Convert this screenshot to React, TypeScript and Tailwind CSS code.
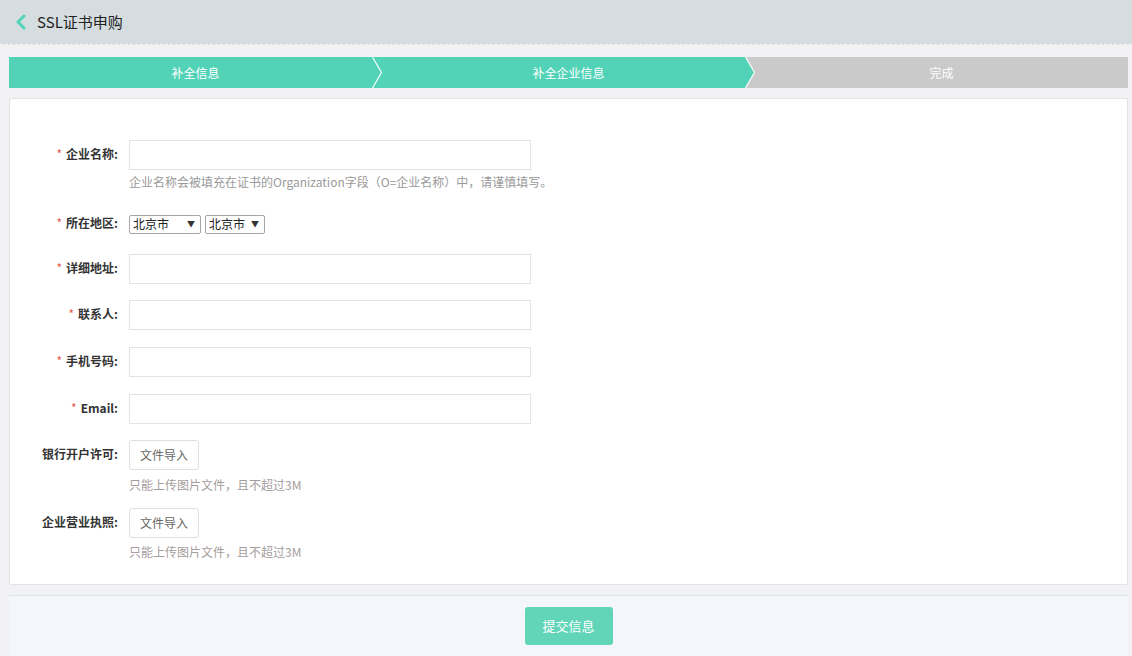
import React from "react";

const font = { fontFamily: '"Microsoft YaHei", "Noto Sans CJK SC", "Noto Sans", sans-serif' };

function Label({ text, required }: { text: string; required?: boolean }) {
  return (
    <div className="w-[108px] shrink-0 text-right text-[12px] font-bold leading-[28px] text-[#333]">
      {required && <span className="mr-[4px] font-normal text-[#e05a4f]">*</span>}
      {text}:
    </div>
  );
}

function TextInput() {
  return <div className="h-[30px] w-[402px] border border-[#e3e3e3] bg-white" />;
}

function FakeSelect({ width }: { width: string }) {
  return (
    <div className={`flex h-[19px] ${width} items-center justify-between rounded-[2px] border border-[#a6a6a6] bg-white pl-[3px] pr-[5px] text-[12px] text-[#222]`}>
      <span>北京市</span>
      <span className="text-[8px] text-[#333]">▼</span>
    </div>
  );
}

function UploadButton() {
  return (
    <div className="flex h-[30px] w-[70px] items-center justify-center rounded-[3px] border border-[#dcdfe6] bg-white text-[12px] text-[#666]">
      文件导入
    </div>
  );
}

function Chevron({ next }: { next: string }) {
  return (
    <svg className="absolute right-0 top-0 h-[31px] w-[10px]" viewBox="0 0 10 31" preserveAspectRatio="none">
      <polygon points="0.5,0 10,0 10,31 0.5,31 9.5,15.5" fill={next} />
      <polyline points="0.5,0 9.5,15.5 0.5,31" fill="none" stroke="#ffffff" strokeWidth="1.2" />
    </svg>
  );
}

export default function App() {
  const steps = [
    { label: "补全信息", color: "#52d3b7" },
    { label: "补全企业信息", color: "#52d3b7" },
    { label: "完成", color: "#cacaca" },
  ];

  return (
    <div className="min-h-[656px] bg-[#f2f2f5]" style={font}>
      {/* Header */}
      <header className="flex h-[45px] items-center border-b border-dashed border-[#f5f5f5] bg-[#d5dde0] pl-[15px]">
        <svg width="12" height="16" viewBox="0 0 12 16" className="mr-[10px]">
          <polyline points="9,2 3,8 9,14" fill="none" stroke="#52d3b7" strokeWidth="3" strokeLinecap="round" strokeLinejoin="round" />
        </svg>
        <span className="text-[15px] text-[#222]">SSL证书申购</span>
      </header>

      <div className="pl-[9px] pr-[4px]">
        {/* Steps */}
        <div className="mt-[12px] flex h-[31px]">
          {steps.map((s, i) => (
            <div
              key={s.label}
              className="relative flex flex-1 items-center justify-center text-[12px] text-white"
              style={{ backgroundColor: s.color }}
            >
              {s.label}
              {i < steps.length - 1 && <Chevron next={steps[i + 1].color} />}
            </div>
          ))}
        </div>

        {/* Form card */}
        <div className="mt-[10px] rounded-[2px] border border-[#e3e3e3] bg-white pb-[24px] pt-[41px]">
          <div className="flex gap-[11px]">
            <Label text="企业名称" required />
            <div>
              <TextInput />
              <div className="mt-[4px] text-[12px] leading-[16px] text-[#9a9a9a]">
                企业名称会被填充在证书的Organization字段（O=企业名称）中，请谨慎填写。
              </div>
            </div>
          </div>

          <div className="mt-[19px] flex gap-[11px]">
            <Label text="所在地区" required />
            <div className="flex h-[30px] items-center gap-[4px]">
              <FakeSelect width="w-[72px]" />
              <FakeSelect width="w-[60px]" />
            </div>
          </div>

          <div className="mt-[15px] flex gap-[11px]">
            <Label text="详细地址" required />
            <TextInput />
          </div>

          <div className="mt-[16px] flex gap-[11px]">
            <Label text="联系人" required />
            <TextInput />
          </div>

          <div className="mt-[17px] flex gap-[11px]">
            <Label text="手机号码" required />
            <TextInput />
          </div>

          <div className="mt-[17px] flex gap-[11px]">
            <Label text="Email" required />
            <TextInput />
          </div>

          <div className="mt-[16px] flex gap-[11px]">
            <Label text="银行开户许可" />
            <div>
              <UploadButton />
              <div className="mt-[7px] text-[12px] leading-[16px] text-[#a59d9d]">只能上传图片文件，且不超过3M</div>
            </div>
          </div>

          <div className="mt-[15px] flex gap-[11px]">
            <Label text="企业营业执照" />
            <div>
              <UploadButton />
              <div className="mt-[6px] text-[12px] leading-[16px] text-[#a59d9d]">只能上传图片文件，且不超过3M</div>
            </div>
          </div>
        </div>

        {/* Footer */}
        <div className="mt-[10px] flex h-[61px] justify-center border-t border-[#dde3e8] bg-[#f3f6fa] pt-[11px]">
          <button className="h-[38px] w-[88px] rounded-[3px] bg-[#62d5b8] text-[13px] text-white">提交信息</button>
        </div>
      </div>
    </div>
  );
}
